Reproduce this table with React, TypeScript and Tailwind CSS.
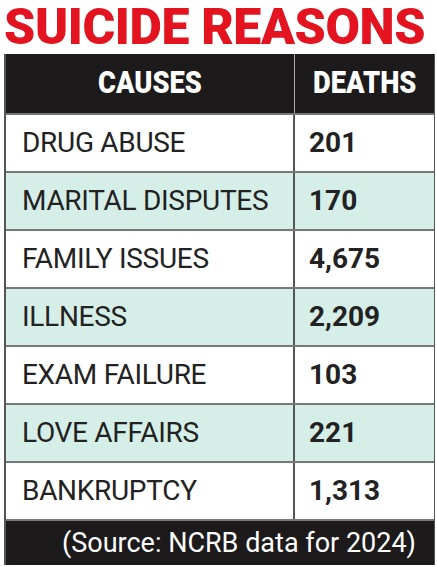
const rows = [
  { cause: "DRUG ABUSE", deaths: "201" },
  { cause: "MARITAL DISPUTES", deaths: "170" },
  { cause: "FAMILY ISSUES", deaths: "4,675" },
  { cause: "ILLNESS", deaths: "2,209" },
  { cause: "EXAM FAILURE", deaths: "103" },
  { cause: "LOVE AFFAIRS", deaths: "221" },
  { cause: "BANKRUPTCY", deaths: "1,313" },
];

export default function App() {
  return (
    <div className="w-[437px] h-[567px] bg-white font-['Roboto',sans-serif]">
      <h1 className="h-[54px] pt-[1px] pl-[4px] whitespace-nowrap text-[#e3141f] text-[50px] leading-[52px] font-black tracking-[-0.4px]">
        SUICIDE REASONS
      </h1>

      <div className="ml-[4px] w-[431px] border-l-2 border-r border-[#555]">
        <div className="grid grid-cols-[289px_1fr] h-[59px] bg-[#1d1a1b] text-white font-black text-[31px]">
          <div className="flex items-center justify-center border-r border-[#aaa]">
            <span className="inline-block scale-x-[0.88]">CAUSES</span>
          </div>
          <div className="flex items-center justify-center">
            <span className="inline-block scale-x-[0.88]">DEATHS</span>
          </div>
        </div>

        {rows.map((r, i) => (
          <div
            key={r.cause}
            className={
              "grid grid-cols-[289px_1fr] h-[58px] border-t-2 border-[#777] text-[#222] text-[28px] " +
              (i % 2 === 1 ? "bg-[#d6eee8]" : "bg-white")
            }
          >
            <div className="flex items-center pl-[16px] border-r-2 border-[#555] tracking-[-0.3px]">{r.cause}</div>
            <div className="flex items-center pl-[14px] font-bold">{r.deaths}</div>
          </div>
        ))}

        <div className="h-[46px] bg-[#1d1a1b] border-t-2 border-[#777] text-white text-[27px] flex items-center justify-end pr-[18px]">
          (Source: NCRB data for 2024)
        </div>
      </div>
    </div>
  );
}
